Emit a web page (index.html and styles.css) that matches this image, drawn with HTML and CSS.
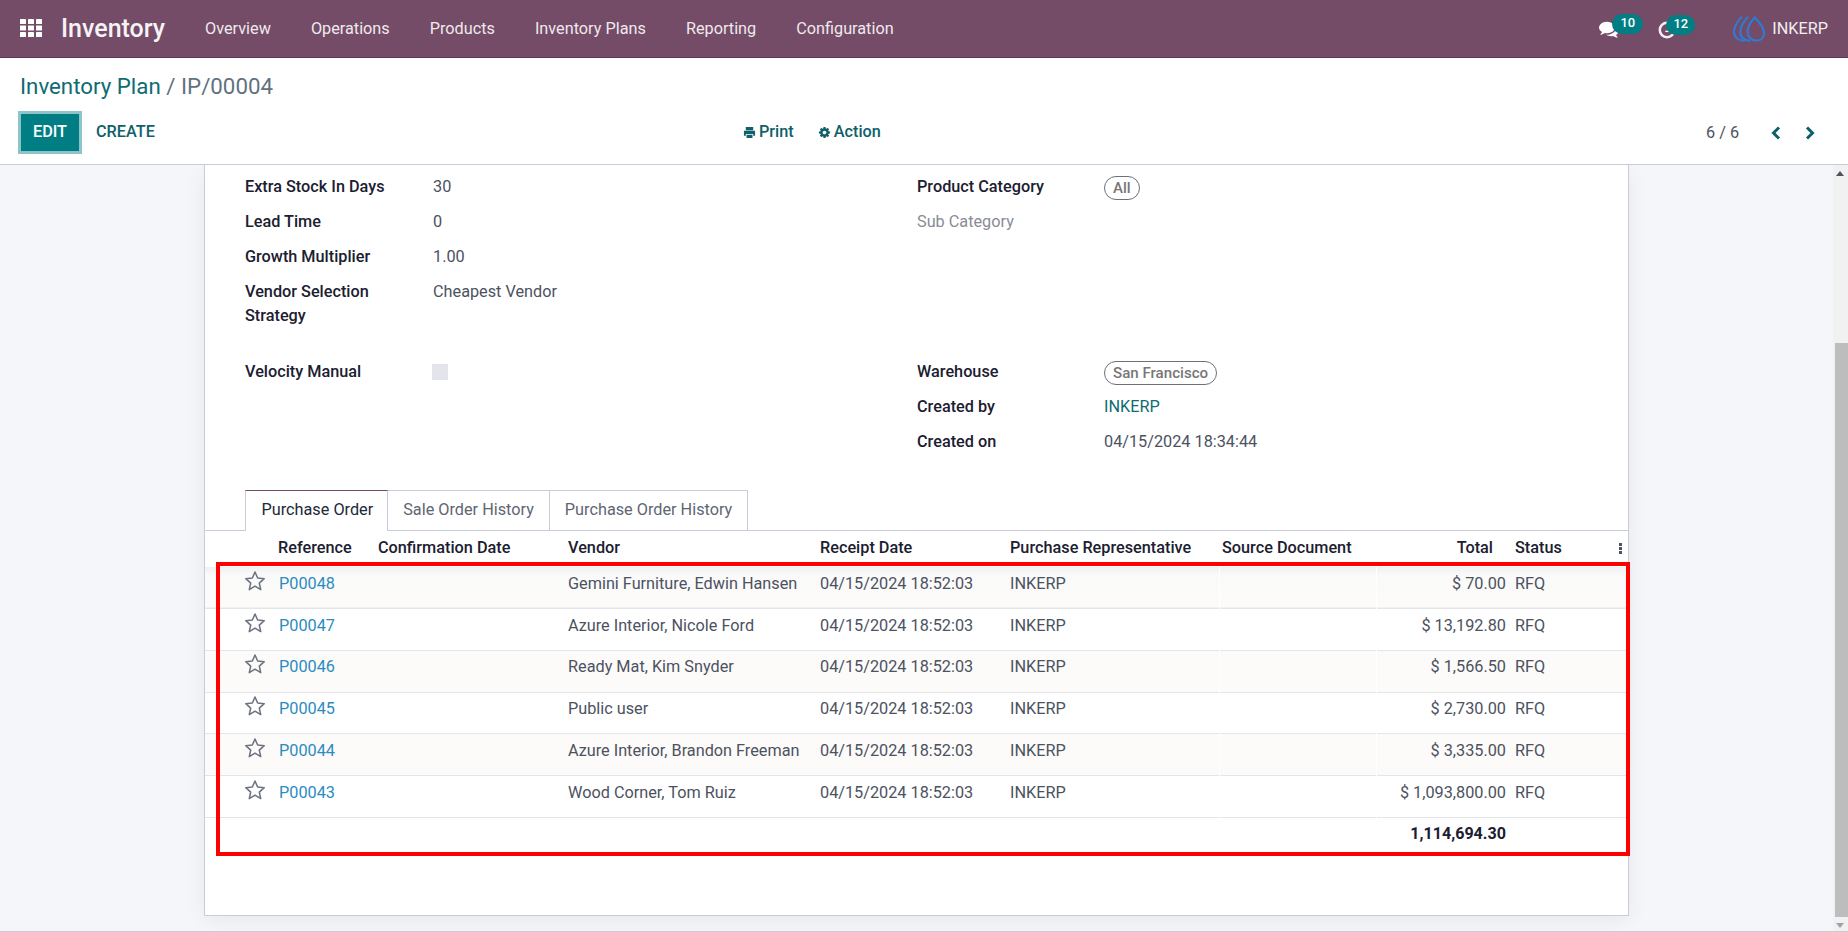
FILE: index.html
```html
<!DOCTYPE html>
<html lang="en">
<head>
<meta charset="utf-8">
<title>Inventory Plan</title>
<link rel="stylesheet" href="styles.css">
</head>
<body>
<header class="navbar">
  <svg class="apps" viewBox="0 0 22 18"><g fill="#fff"><rect x="0" y="0" width="6" height="5" rx=".6"/><rect x="8" y="0" width="6" height="5" rx=".6"/><rect x="16" y="0" width="6" height="5" rx=".6"/><rect x="0" y="6.5" width="6" height="5" rx=".6"/><rect x="8" y="6.5" width="6" height="5" rx=".6"/><rect x="16" y="6.5" width="6" height="5" rx=".6"/><rect x="0" y="13" width="6" height="5" rx=".6"/><rect x="8" y="13" width="6" height="5" rx=".6"/><rect x="16" y="13" width="6" height="5" rx=".6"/></g></svg>
  <span class="brand">Inventory</span>
  <nav class="menu">
    <a>Overview</a><a>Operations</a><a>Products</a><a>Inventory Plans</a><a>Reporting</a><a>Configuration</a>
  </nav>
  <div class="systray">
    <div class="tray-item chat">
      <svg class="tray-icon" viewBox="0 0 1792 1792"><path fill="#fff" d="M1408 768q0 139-94 257t-256.500 186.500-353.500 68.500q-86 0-176-16-124 88-278 128-36 9-86 16h-3q-11 0-20.500-8t-11.500-21q-1-3-1-6.500t.5-6.500 2-6l2.500-5 3.500-5.500 4-5 4.500-5 4-4.500q5-6 23-25t26-29.500 22.500-29 25-38.500 20.500-44q-124-72-195-177t-71-224q0-139 94-257t256.500-186.500 353.500-68.500 353.500 68.500 256.500 186.500 94 257zm384 256q0 120-71 224.500t-195 176.500q10 24 20.500 44t25 38.500 22.500 29 26 29.500 23 25q1 1 4 4.500t4.500 5 4 5 3.500 5.500l2.500 5 2 6 .5 6.500-1 6.500q-3 14-13 22t-22 7q-50-7-86-16-154-40-278-128-90 16-176 16-271 0-472-132 58 4 88 4 161 0 309-45t264-129q125-92 192-212t67-254q0-77-23-152 129 71 204 178t75 230z"/></svg>
      <span class="count count-chat">10</span>
    </div>
    <div class="tray-item clock">
      <svg class="tray-icon" viewBox="0 0 20 20"><circle cx="10" cy="10" r="8" fill="none" stroke="#f4eff2" stroke-width="2.800"/><path d="M8 11.500H12" stroke="#f4eff2" stroke-width="1.600"/></svg>
      <span class="count count-clock">12</span>
    </div>
    <div class="user">
      <svg class="logo" viewBox="0 0 33 26"><g fill="none" stroke="#2e7bd6" stroke-width="2.200" stroke-linecap="round"><path d="M22.500 1C18 6 15 10 15 15.500 15 21 19 25 24 25 29.500 25 32 21 32 17 32 11 27 6 22.500 1Z"/><path d="M15 1C10.500 6 7.500 11 7.500 16 7.500 21.500 12 25 17 25"/><path d="M8.500 1C4 6 1 11 1 16 1 21.500 5.500 25 11 25"/></g></svg>
      <span>INKERP</span>
    </div>
  </div>
</header>

<section class="control">
  <div class="crumbs"><a>Inventory Plan</a><span> / IP/00004</span></div>
  <div class="actions">
    <div class="buttons"><button class="btn-edit">EDIT</button><button class="btn-create">CREATE</button></div>
    <div class="side">
      <a class="side-link"><svg class="side-icon" viewBox="0 0 14 14"><path fill="#0f6069" d="M3 1h8v3.500H3zM1 5h12v5.500h-2V8.500H3v2H1zM3.800 9.500h6.400V13H3.800z"/></svg>Print</a>
      <a class="side-link"><svg class="side-icon" viewBox="0 0 1792 1792"><path fill="#0f6069" d="M1152 896q0-106-75-181t-181-75-181 75-75 181 75 181 181 75 181-75 75-181zm512-109v222q0 12-8 23t-20 13l-185 28q-19 54-39 91 35 50 107 138 10 12 10 25t-9 23q-27 37-99 108t-94 71q-12 0-26-9l-138-108q-44 23-91 38-16 136-29 186-7 28-36 28h-222q-14 0-24.500-8.500t-11.500-21.500l-28-184q-49-16-90-37l-141 107q-10 9-25 9-14 0-25-11-126-114-165-168-7-10-7-23 0-12 8-23 15-21 51-66.500t54-70.500q-27-50-41-99l-183-27q-13-2-21-12.500t-8-23.500v-222q0-12 8-23t19-13l186-28q14-46 39-92-40-57-107-138-10-12-10-24 0-10 9-23 26-36 98.500-107.500t94.500-71.500q13 0 26 10l138 107q44-23 91-38 16-136 29-186 7-28 36-28h222q14 0 24.500 8.500t11.500 21.500l28 184q49 16 90 37l142-107q9-9 24-9 13 0 25 10 129 119 165 170 7 8 7 22 0 12-8 23-15 21-51 66.500t-54 70.500q26 50 41 98l183 28q13 2 21 12.500t8 23.500z"/></svg>Action</a>
    </div>
    <div class="pager">
      <span class="pager-value">6 / 6</span>
      <svg class="chev" viewBox="0 0 10 14"><path d="M8 1.500 2.500 7 8 12.500" fill="none" stroke="#0f6069" stroke-width="3"/></svg>
      <svg class="chev" viewBox="0 0 10 14"><path d="M2 1.500 7.500 7 2 12.500" fill="none" stroke="#0f6069" stroke-width="3"/></svg>
    </div>
  </div>
</section>

<div class="workspace">
  <main class="content">
    <article class="sheet">
      <div class="group group-top">
        <div class="col col-left">
          <div class="field"><label>Extra Stock In Days</label><span>30</span></div>
          <div class="field"><label>Lead Time</label><span>0</span></div>
          <div class="field"><label>Growth Multiplier</label><span>1.00</span></div>
          <div class="field"><label>Vendor Selection Strategy</label><span>Cheapest Vendor</span></div>
        </div>
        <div class="col">
          <div class="field"><label>Product Category</label><span class="badge">All</span></div>
          <div class="field"><label class="muted">Sub Category</label><span></span></div>
        </div>
      </div>
      <div class="group group-second">
        <div class="col col-left">
          <div class="field"><label>Velocity Manual</label><span class="check"></span></div>
        </div>
        <div class="col">
          <div class="field"><label>Warehouse</label><span class="badge">San Francisco</span></div>
          <div class="field"><label>Created by</label><a class="link-teal">INKERP</a></div>
          <div class="field"><label>Created on</label><span>04/15/2024 18:34:44</span></div>
        </div>
      </div>

      <ul class="tabs">
        <li class="tab active">Purchase Order</li>
        <li class="tab">Sale Order History</li>
        <li class="tab">Purchase Order History</li>
      </ul>

      <table class="orders">
        <colgroup>
          <col class="c-star"><col class="c-ref"><col class="c-conf"><col class="c-vendor"><col class="c-receipt"><col class="c-rep"><col class="c-source"><col class="c-total"><col class="c-status"><col class="c-opt">
        </colgroup>
        <thead>
          <tr>
            <th></th><th>Reference</th><th>Confirmation Date</th><th>Vendor</th><th>Receipt Date</th><th>Purchase Representative</th><th>Source Document</th><th class="num head-total">Total</th><th>Status</th>
            <th class="kebab-cell"><span class="kebab"><i></i><i></i><i></i></span></th>
          </tr>
        </thead>
        <tbody>
          <tr><td class="star"><svg viewBox="0 0 20 20"><use href="#star"/></svg></td><td class="ref"><a>P00048</a></td><td></td><td>Gemini Furniture, Edwin Hansen</td><td>04/15/2024 18:52:03</td><td>INKERP</td><td class="gap"></td><td class="num gap">$ 70.00</td><td>RFQ</td><td></td></tr>
          <tr><td class="star"><svg viewBox="0 0 20 20"><use href="#star"/></svg></td><td class="ref"><a>P00047</a></td><td></td><td>Azure Interior, Nicole Ford</td><td>04/15/2024 18:52:03</td><td>INKERP</td><td class="gap"></td><td class="num gap">$ 13,192.80</td><td>RFQ</td><td></td></tr>
          <tr><td class="star"><svg viewBox="0 0 20 20"><use href="#star"/></svg></td><td class="ref"><a>P00046</a></td><td></td><td>Ready Mat, Kim Snyder</td><td>04/15/2024 18:52:03</td><td>INKERP</td><td class="gap"></td><td class="num gap">$ 1,566.50</td><td>RFQ</td><td></td></tr>
          <tr><td class="star"><svg viewBox="0 0 20 20"><use href="#star"/></svg></td><td class="ref"><a>P00045</a></td><td></td><td>Public user</td><td>04/15/2024 18:52:03</td><td>INKERP</td><td class="gap"></td><td class="num gap">$ 2,730.00</td><td>RFQ</td><td></td></tr>
          <tr><td class="star"><svg viewBox="0 0 20 20"><use href="#star"/></svg></td><td class="ref"><a>P00044</a></td><td></td><td>Azure Interior, Brandon Freeman</td><td>04/15/2024 18:52:03</td><td>INKERP</td><td class="gap"></td><td class="num gap">$ 3,335.00</td><td>RFQ</td><td></td></tr>
          <tr><td class="star"><svg viewBox="0 0 20 20"><use href="#star"/></svg></td><td class="ref"><a>P00043</a></td><td></td><td>Wood Corner, Tom Ruiz</td><td>04/15/2024 18:52:03</td><td>INKERP</td><td class="gap"></td><td class="num gap">$ 1,093,800.00</td><td>RFQ</td><td></td></tr>
        </tbody>
        <tfoot>
          <tr><td colspan="7"></td><td class="num">1,114,694.30</td><td colspan="2"></td></tr>
        </tfoot>
      </table>
      <div class="highlight"></div>
    </article>
  </main>
  <div class="scrollbar">
    <span class="arrow arrow-up"></span>
    <div class="track"><div class="thumb"></div></div>
    <span class="arrow arrow-down"></span>
  </div>
</div>

<svg class="defs" width="0" height="0"><defs><path id="star" d="M10 1.800 12.400 7.300 18.400 7.900 13.900 11.900 15.200 17.800 10 14.700 4.800 17.800 6.100 11.900 1.600 7.900 7.600 7.300Z" fill="none" stroke="#6c7280" stroke-width="1.400" stroke-linejoin="round"/></defs></svg>
</body>
</html>
```

FILE: styles.css
```css
* { box-sizing: border-box; }
html, body { height: 100%; }
body {
  margin: 0;
  display: flex;
  flex-direction: column;
  height: 932px;
  overflow: hidden;
  font-family: Roboto, "Liberation Sans", sans-serif;
  font-size: 16.250px;
  line-height: 24px;
  color: #4c5261;
  background: #fff;
}

/* navbar */
.navbar {
  flex: none;
  height: 58px;
  display: flex;
  align-items: center;
  padding-left: 20px;
  background: #744c67;
  border-bottom: 1px solid #5a3a50;
  color: #fff;
}
.apps { width: 22px; height: 18px; flex: none; margin-top: -2px; }
.brand { margin-left: 19px; font-size: 25px; font-weight: 500; width: 103px; color: #f6f2f5; }
.menu { display: flex; margin-left: 21px; }
.menu a { padding: 0 20px; font-size: 16.250px; color: #efe9ed; white-space: nowrap; }
.systray { margin-left: auto; display: flex; align-items: center; height: 100%; }
.tray-item { position: relative; display: flex; }
.tray-item.chat { width: 60px; }
.tray-item.clock { width: 75px; }
.tray-icon { width: 20px; height: 20px; margin: 1px 0 0 1px; }
.clock .tray-icon { width: 18px; height: 18px; margin: 2px 0 0; }
.count {
  position: absolute;
  top: -4px;
  height: 20px;
  border-radius: 10px;
  background: #017e84;
  color: #fff;
  font-size: 13px;
  font-weight: 500;
  line-height: 18px;
  text-align: center;
}
.count-chat { left: 14px; width: 31px; }
.count-clock { left: 8px; width: 29px; }
.user { display: flex; align-items: center; gap: 7px; padding-right: 20px; font-size: 16.250px; color: #f1edf0; }
.logo { width: 32px; height: 26px; }

/* control panel */
.control {
  flex: none;
  height: 107px;
  padding: 14px 0 0 20px;
  border-bottom: 1px solid #c9ccd8;
  background: #fff;
}
.crumbs { font-size: 22.300px; line-height: 28px; color: #5f7281; }
.crumbs a { color: #0f6b74; }
.actions { display: flex; align-items: center; margin: 11px 0 0 -2px; height: 43px; }
.buttons { display: flex; width: 726px; flex: none; }
.btn-edit {
  width: 64px;
  height: 43px;
  padding: 0 0 2px;
  border: 3px solid #8dc4c7;
  background: #017e84;
  color: #fff;
  font: 500 16.250px Roboto, sans-serif;
}
.btn-create {
  margin-left: 14px;
  border: 0;
  padding: 0 0 2px;
  background: none;
  color: #0f6069;
  font: 500 16.250px Roboto, sans-serif;
}
.side { display: flex; gap: 24px; margin-top: -2px; margin-left: -1px; }
.side-link { display: flex; align-items: center; gap: 3px; color: #0f6069; font-size: 16.250px; font-weight: 500; }
.side-icon { width: 13px; height: 13px; margin-top: 2px; }
.pager { margin-left: auto; display: flex; align-items: center; width: 142px; flex: none; font-size: 16.250px; color: #4c5261; }
.pager-value { width: 65px; }
.chev { width: 10px; height: 14px; }
.chev + .chev { margin-left: 24px; }

/* workspace */
.workspace {
  flex: 1;
  min-height: 0;
  display: flex;
  border-bottom: 1px solid #c9ccd8;
}
.content {
  flex: 1;
  min-width: 0;
  overflow: hidden;
  background: #f5f6fa;
}
.sheet {
  position: relative;
  width: 1425px;
  height: 751px;
  margin: 0 auto;
  padding-top: 4px;
  background: #fff;
  border: 1px solid #c9ccd8;
  border-top: 0;
  box-shadow: 0 5px 20px rgba(0, 0, 0, .06);
}
.group { display: grid; grid-template-columns: 672px 1fr; padding-left: 40px; }
.group-top { height: 185px; }
.group-second { height: 136px; }
.field { display: grid; grid-template-columns: 187px 1fr; padding: 6px 0 5px; min-height: 35px; align-items: start; }
.col-left .field { grid-template-columns: 188px 1fr; }
.field label { padding-right: 16px; color: #1b2030; font-weight: 500; }
.field label.muted { color: #8a8b96; font-weight: 400; }
.field span { color: #4c5261; }
.badge {
  justify-self: start;
  height: 24px;
  margin: 1px 0 -1px;
  padding: 0 8px;
  border: 1px solid #6c707c;
  border-radius: 12px;
  font-size: 15.100px;
  font-weight: 500;
  line-height: 22px;
  color: #777 !important;
}
.check { width: 16px; height: 16px; margin: 4px 0 0 -1px; background: #e4e5ea; }
.link-teal { color: #0f6b74; }

/* tabs */
.tabs {
  display: flex;
  margin: 0;
  padding: 0 0 0 40px;
  list-style: none;
  height: 41px;
  border-bottom: 1px solid #c9ccd8;
}
.tab {
  height: 40px;
  padding: 7px 15px;
  border: 1px solid #c9ccd8;
  border-left: 0;
  border-bottom: 0;
  color: #5f6573;
  white-space: nowrap;
}
.tab.active {
  height: 41px;
  padding: 7px 14px 7px 15.500px;
  border-left: 1px solid #c9ccd8;
  border-top-color: #744c67;
  background: #fff;
  color: #222838;
}

/* table */
.orders { width: 1423px; table-layout: fixed; border-collapse: collapse; }
.c-star { width: 70px; }
.c-ref { width: 100px; }
.c-conf { width: 190px; }
.c-vendor { width: 252px; }
.c-receipt { width: 190px; }
.c-rep { width: 212px; }
.c-source { width: 157px; }
.c-total { width: 136px; }
.c-status { width: 90px; }
.c-opt { width: 26px; }
.orders th {
  height: 36px;
  padding: 0 3px 2px;
  text-align: left;
  font-weight: 500;
  color: #1b2030;
  white-space: nowrap;
}
.orders td {
  padding: 5px 3px 0;
  vertical-align: top;
  white-space: nowrap;
  color: #4c5261;
}
.orders tbody tr { height: 42px; border-bottom: 1px solid #e4e5ea; }
.orders tbody tr:first-child,
.orders tbody tr:nth-child(4) { height: 41px; }
.orders tbody tr:nth-child(odd) { background: #fcfbf9; }
.orders tbody tr:first-child { background: linear-gradient(#f0f0f2, #fafafa 8px, #fcfbf9); }
.orders tbody tr:nth-child(3) td,
.orders tbody tr:nth-child(4) td { padding-top: 4px; }
.orders tbody .gap { border-left: 1px solid #fff; }
.orders tfoot tr { height: 36px; border-top: 1px solid #c9ccd8; }
.orders tfoot td { font-weight: 700; font-size: 16.100px; color: #1b2030; padding-top: 4px; }
.orders .num { text-align: right; padding-right: 6px; }
.orders .head-total { padding-right: 19px; }
.orders tbody tr td.star { padding: 3px 0 0 39px; }
.orders tbody tr:nth-child(3) td.star,
.orders tbody tr:nth-child(4) td.star { padding-top: 2px; }
.star svg { width: 22px; height: 22px; display: block; }
.ref a { color: #2b8cbf; margin-left: 1px; }
.kebab { display: flex; flex-direction: column; gap: 1px; width: 3px; margin-left: 14px; }
.kebab i { width: 3px; height: 3px; background: #4c5261; }

/* marker drawn over the screenshot */
.highlight {
  position: absolute;
  left: 11px;
  right: -2px;
  top: 397px;
  height: 294px;
  border: 4px solid #f00;
  pointer-events: none;
}

/* scrollbar */
.scrollbar {
  flex: none;
  width: 15px;
  display: flex;
  flex-direction: column;
  background: #f1f1f1;
}
.arrow { flex: none; height: 17px; position: relative; }
.arrow::after {
  content: "";
  position: absolute;
  left: 3px;
  top: 6px;
  border: 4px solid transparent;
}
.arrow-up::after { border-bottom: 5px solid #505060; border-top: 0; }
.arrow-down::after { border-top: 5px solid #a0a0b0; border-bottom: 0; }
.track { flex: 1; padding-top: 161px; }
.thumb { height: 574px; margin-left: 2px; background: #bdbdbd; }
.defs { position: absolute; }
```
